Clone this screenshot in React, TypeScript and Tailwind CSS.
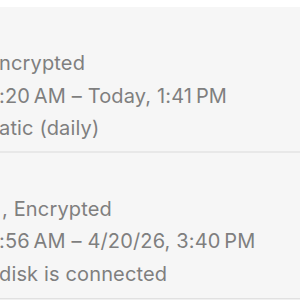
import React from "react";

const rows = [
  {
    lines: [
      { text: "ncrypted", offset: "ml-[-1px]" },
      { text: ":20\u202FAM \u2013 Today, 1:41\u202FPM", offset: "ml-[-1px]" },
      { text: "atic (daily)", offset: "ml-[-1px]" },
    ],
  },
  {
    lines: [
      { text: ", Encrypted", offset: "ml-[2px]" },
      { text: ":56\u202FAM \u2013 4/20/26, 3:40\u202FPM", offset: "ml-[-1px]" },
      { text: "disk is connected", offset: "ml-[-1px]" },
    ],
  },
];

const BackupRow: React.FC<{ lines: { text: string; offset: string }[]; last?: boolean }> = ({
  lines,
  last,
}) => (
  <div
    className={
      last
        ? "pt-[40px] pb-[8px] border-b border-[#e1e1e1]"
        : "pt-[40px] pb-[6px] border-b-2 border-[#e8e8e8]"
    }
  >
    {lines.map((line) => (
      <div
        key={line.text}
        className={`${line.offset} whitespace-nowrap text-[20px] tracking-[0.15px] leading-[32.5px] text-[#7f7f7f]`}
      >
        {line.text}
      </div>
    ))}
  </div>
);

export default function App() {
  return (
    <div
      className="w-[300px] h-[300px] overflow-hidden bg-white"
      style={{ fontFamily: "Inter, 'Liberation Sans', sans-serif" }}
    >
      <div className="mt-[7px] bg-[#f6f6f6]">
        <BackupRow lines={rows[0].lines} />
        <BackupRow lines={rows[1].lines} last />
      </div>
      <div className="h-[10px] bg-[#f0f0f0]" />
    </div>
  );
}
